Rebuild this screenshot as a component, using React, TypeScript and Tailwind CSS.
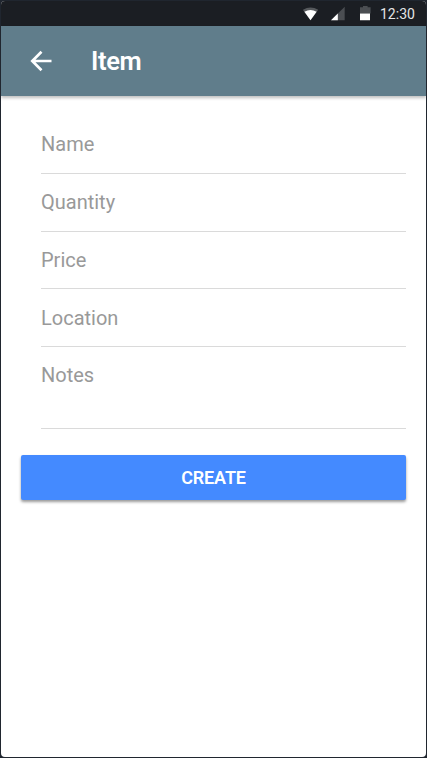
const fields = [
  { label: 'Name', box: 'h-[58px] pt-4' },
  { label: 'Quantity', box: 'h-[58px] pt-4' },
  { label: 'Price', box: 'h-[57px] pt-4' },
  { label: 'Location', box: 'h-[58px] pt-[17px]' },
  { label: 'Notes', box: 'h-[82px] pt-4' },
];

function StatusBar() {
  return (
    <div className="flex h-[25px] shrink-0 items-start bg-[#1b1e23] pl-[302px] text-white">
      <svg className="mt-[5px] h-[15px] w-[70px] shrink-0" viewBox="0 0 70 15">
        <path d="M-.2 3.8Q7.5-1 15.2 3.8L7.5 14.2Z" fill="#56595c" />
        <path d="M1.4 5.8Q7.5 2 13.6 5.8L7.5 14.2Z" fill="#fff" />
        <path d="M41.7 .8V14.2H28Z" fill="#4b4e52" />
        <path d="M34.8 7.5V14.2H28Z" fill="#fff" />
        <path d="M57 1.2h3V0h4.6v1.2h3V7.5H57Z" fill="#4b4e52" />
        <path d="M57 7.5h10V14.2H57Z" fill="#fff" />
      </svg>
      <span className="ml-[7px] mt-[5px] text-[14px] leading-[16px] text-[#e4e4e5]">12:30</span>
    </div>
  );
}

function Header() {
  return (
    <header className="relative flex h-[70px] shrink-0 items-center bg-[#607d8b] pl-[29px] text-white shadow-[0_2px_3px_rgba(0,0,0,0.25)]">
      <svg className="h-[22px] w-[22px]" viewBox="0 0 22 22" fill="none" stroke="currentColor" strokeWidth="2.7">
        <path d="M21.5 11H2.5M11.5 1.8L2.3 11L11.5 20.2" />
      </svg>
      <h1 className="ml-[39px] text-[25.5px] font-semibold leading-[30px] tracking-[-0.35px]">Item</h1>
    </header>
  );
}

export default function App() {
  return (
    <div className="h-[758px] w-[427px] bg-[#20262f] p-px font-['Roboto',sans-serif]">
      <div className="flex h-full flex-col overflow-hidden rounded-[4px] bg-white">
        <StatusBar />
        <Header />
        <main className="flex flex-col px-5 pt-5">
          <div className="ml-5 flex flex-col">
            {fields.map(({ label, box }) => (
              <div key={label} className={`${box} border-b border-[#dadada] text-[20px] leading-6 text-[#999]`}>
                {label}
              </div>
            ))}
          </div>
          <button className="mt-[26px] h-[45px] rounded-[2px] bg-[#448aff] text-[18px] font-semibold tracking-[-0.15px] text-white shadow-[0_2px_3px_rgba(0,0,0,0.4)]">
            CREATE
          </button>
        </main>
      </div>
    </div>
  );
}
